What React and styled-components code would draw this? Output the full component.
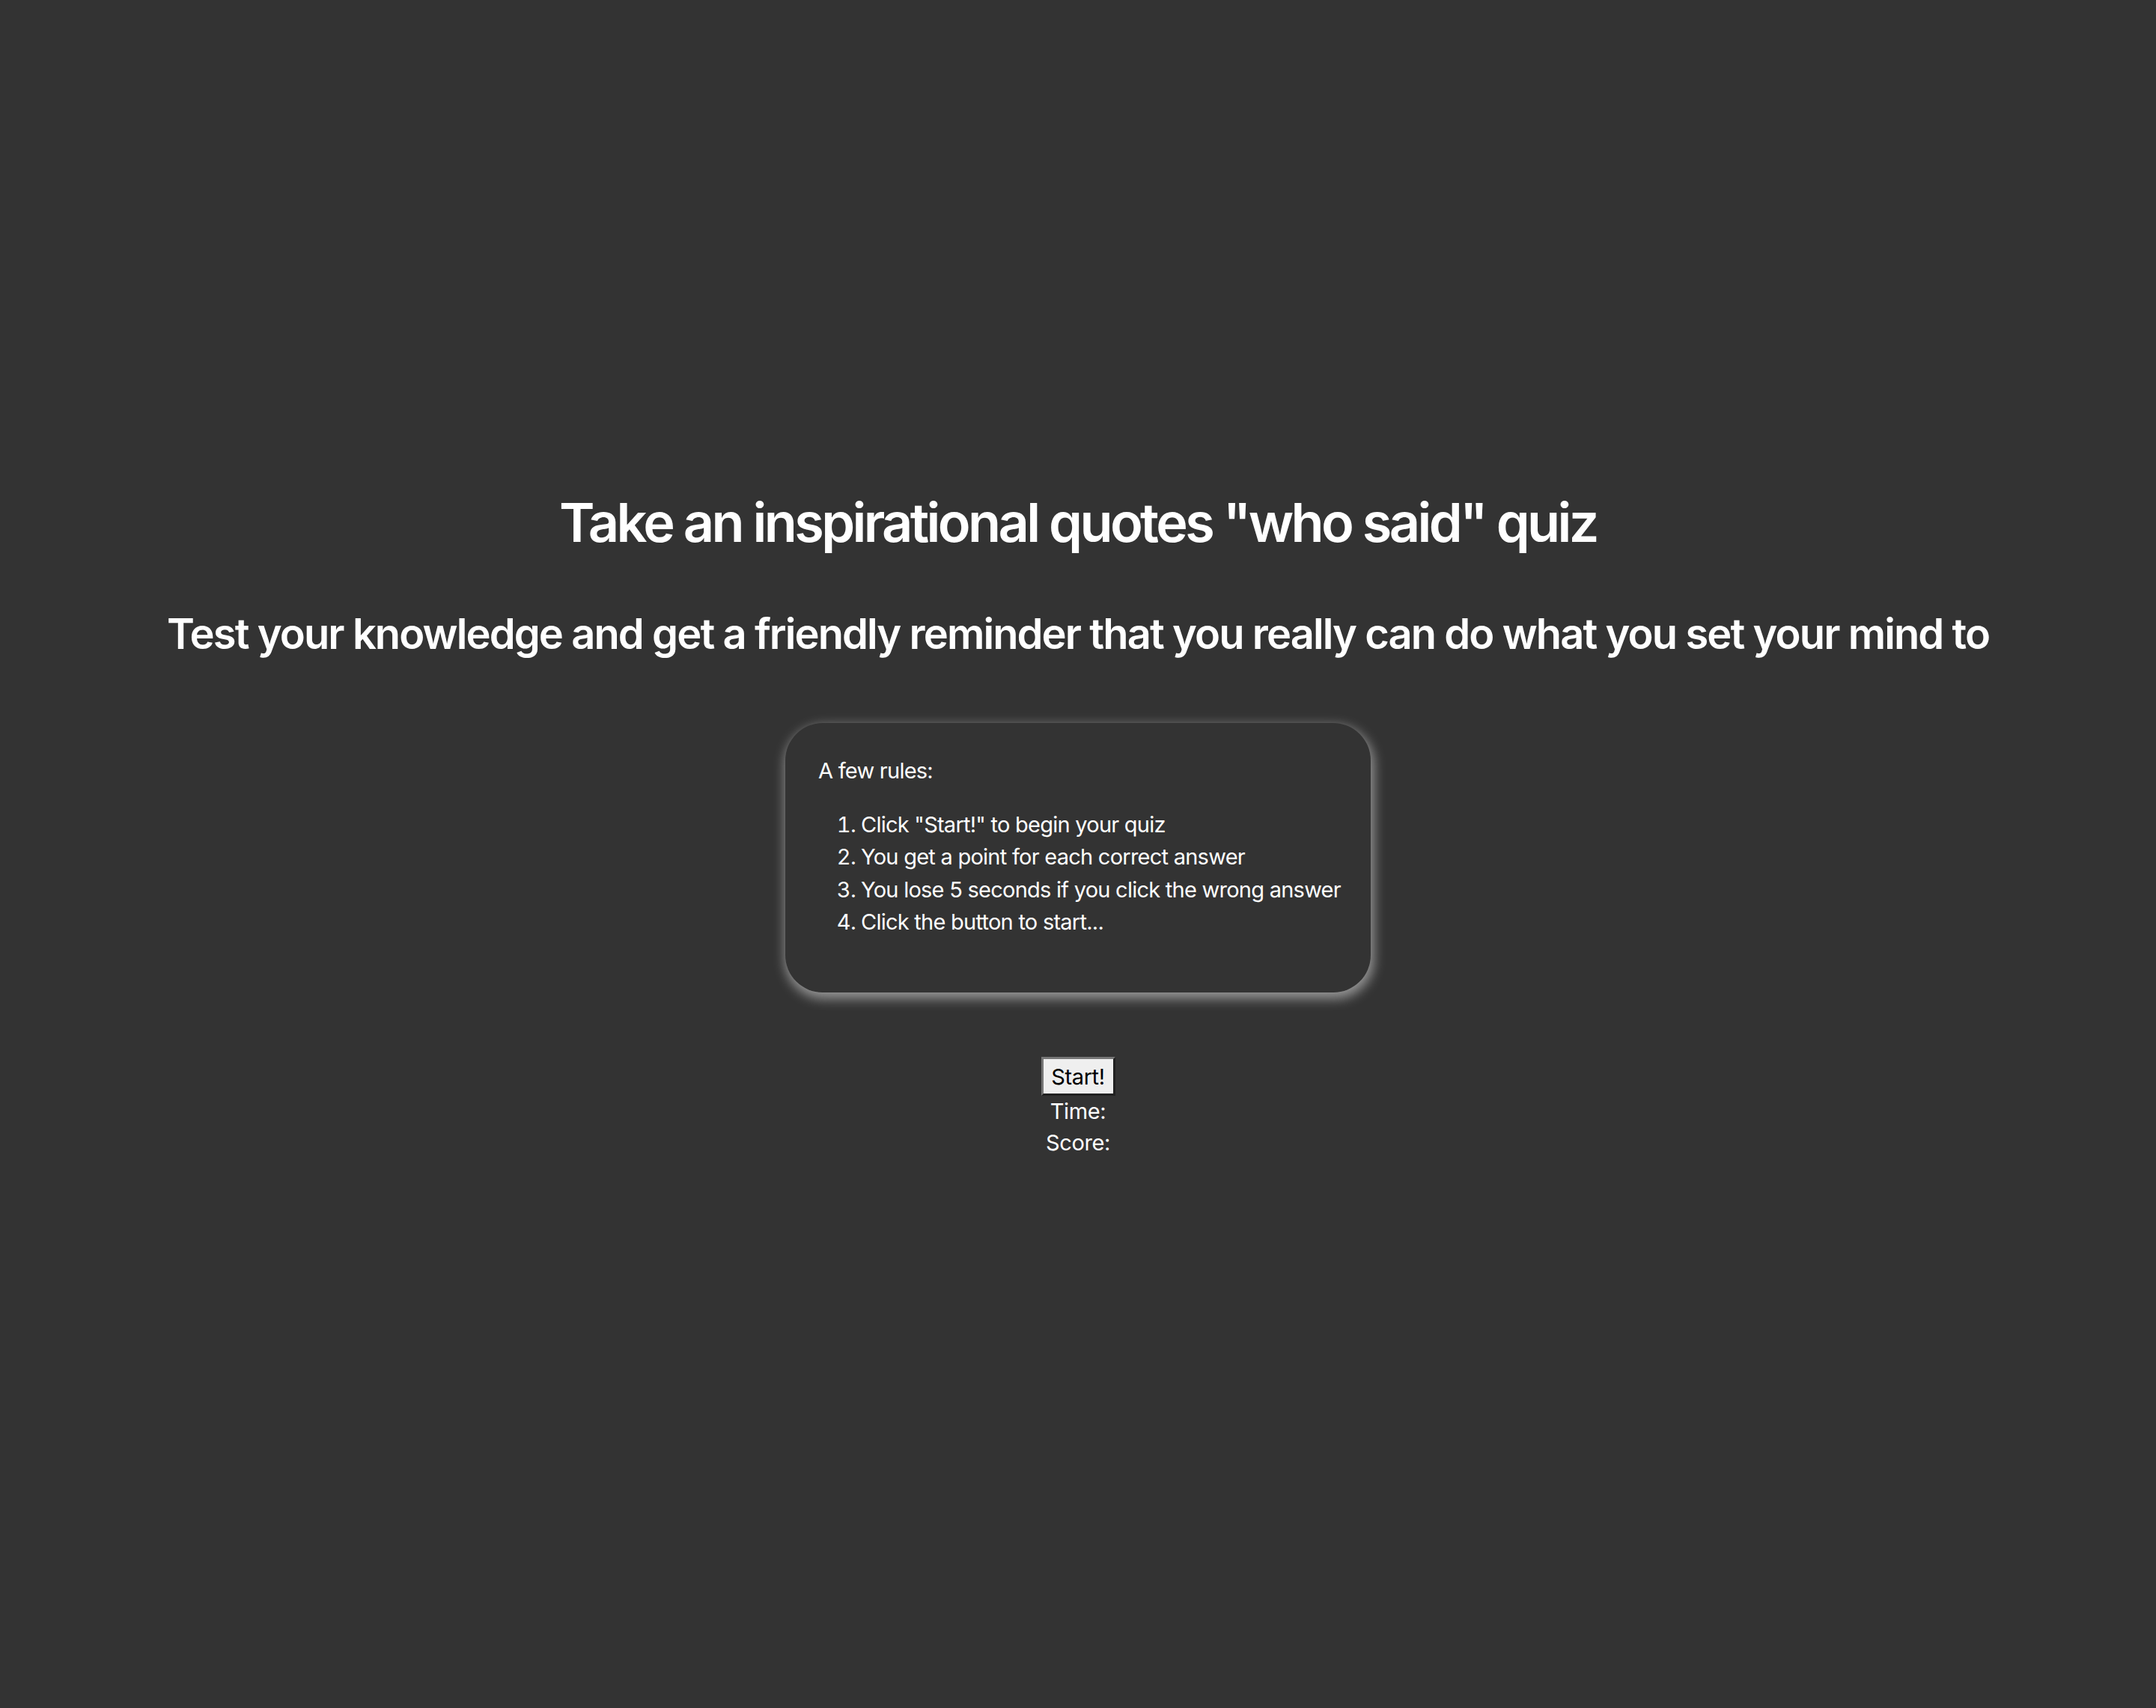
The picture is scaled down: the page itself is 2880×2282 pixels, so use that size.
import React from 'react'
import styled, { createGlobalStyle } from 'styled-components'

const GlobalStyle = createGlobalStyle`
    body {
        margin: 0;
        background-color: #333333;
        font-family: Inter, "Noto Sans", "Liberation Sans", sans-serif;
        color: #ffffff;
    }
`

const Page = styled.main`
    min-height: 100vh;
    display: flex;
    flex-direction: column;
    align-items: center;
    padding-top: 654px;
    box-sizing: border-box;
    text-align: center;
`

const Title = styled.h1`
    margin: 0;
    font-size: 72px;
    line-height: 88px;
    font-weight: 600;
    letter-spacing: -3.6px;
`

const Subtitle = styled.h2`
    margin: 70px 0 0;
    font-size: 56px;
    line-height: 70px;
    font-weight: 600;
    letter-spacing: -1.9px;
`

const RulesCard = styled.section`
    margin-top: 84px;
    width: 782px;
    height: 360px;
    box-sizing: border-box;
    padding: 42px 44px;
    border-radius: 50px;
    box-shadow: 2px 6px 16px 2px rgba(170, 170, 170, 0.85);
    text-align: left;
    font-size: 29px;
    line-height: 43.5px;
    letter-spacing: -0.75px;
`

const RulesIntro = styled.p`
    margin: 0;
`

const RulesList = styled.ol`
    margin: 28px 0 0;
    padding-left: 57px;
`

const Rule = styled.li`
    white-space: nowrap;
`

const StartButton = styled.button`
    margin-top: 86px;
    width: 99px;
    height: 52px;
    padding: 0;
    font-family: inherit;
    font-size: 29px;
    letter-spacing: -0.4px;
    color: #000;
    background-color: #efefef;
    border: 3px outset #767676;
    cursor: pointer;
`

const Stat = styled.div`
    font-size: 29px;
    line-height: 42px;
    letter-spacing: -0.4px;
`

export default function App() {
    return (
        <>
            <GlobalStyle />
            <Page>
                <Title>Take an inspirational quotes "who said" quiz</Title>
                <Subtitle>Test your knowledge and get a friendly reminder that you really can do what you set your mind to</Subtitle>
                <RulesCard>
                    <RulesIntro>A few rules:</RulesIntro>
                    <RulesList>
                        <Rule>Click "Start!" to begin your quiz</Rule>
                        <Rule>You get a point for each correct answer</Rule>
                        <Rule>You lose 5 seconds if you click the wrong answer</Rule>
                        <Rule>Click the button to start...</Rule>
                    </RulesList>
                </RulesCard>
                <StartButton>Start!</StartButton>
                <Stat>Time:</Stat>
                <Stat>Score:</Stat>
            </Page>
        </>
    )
}
